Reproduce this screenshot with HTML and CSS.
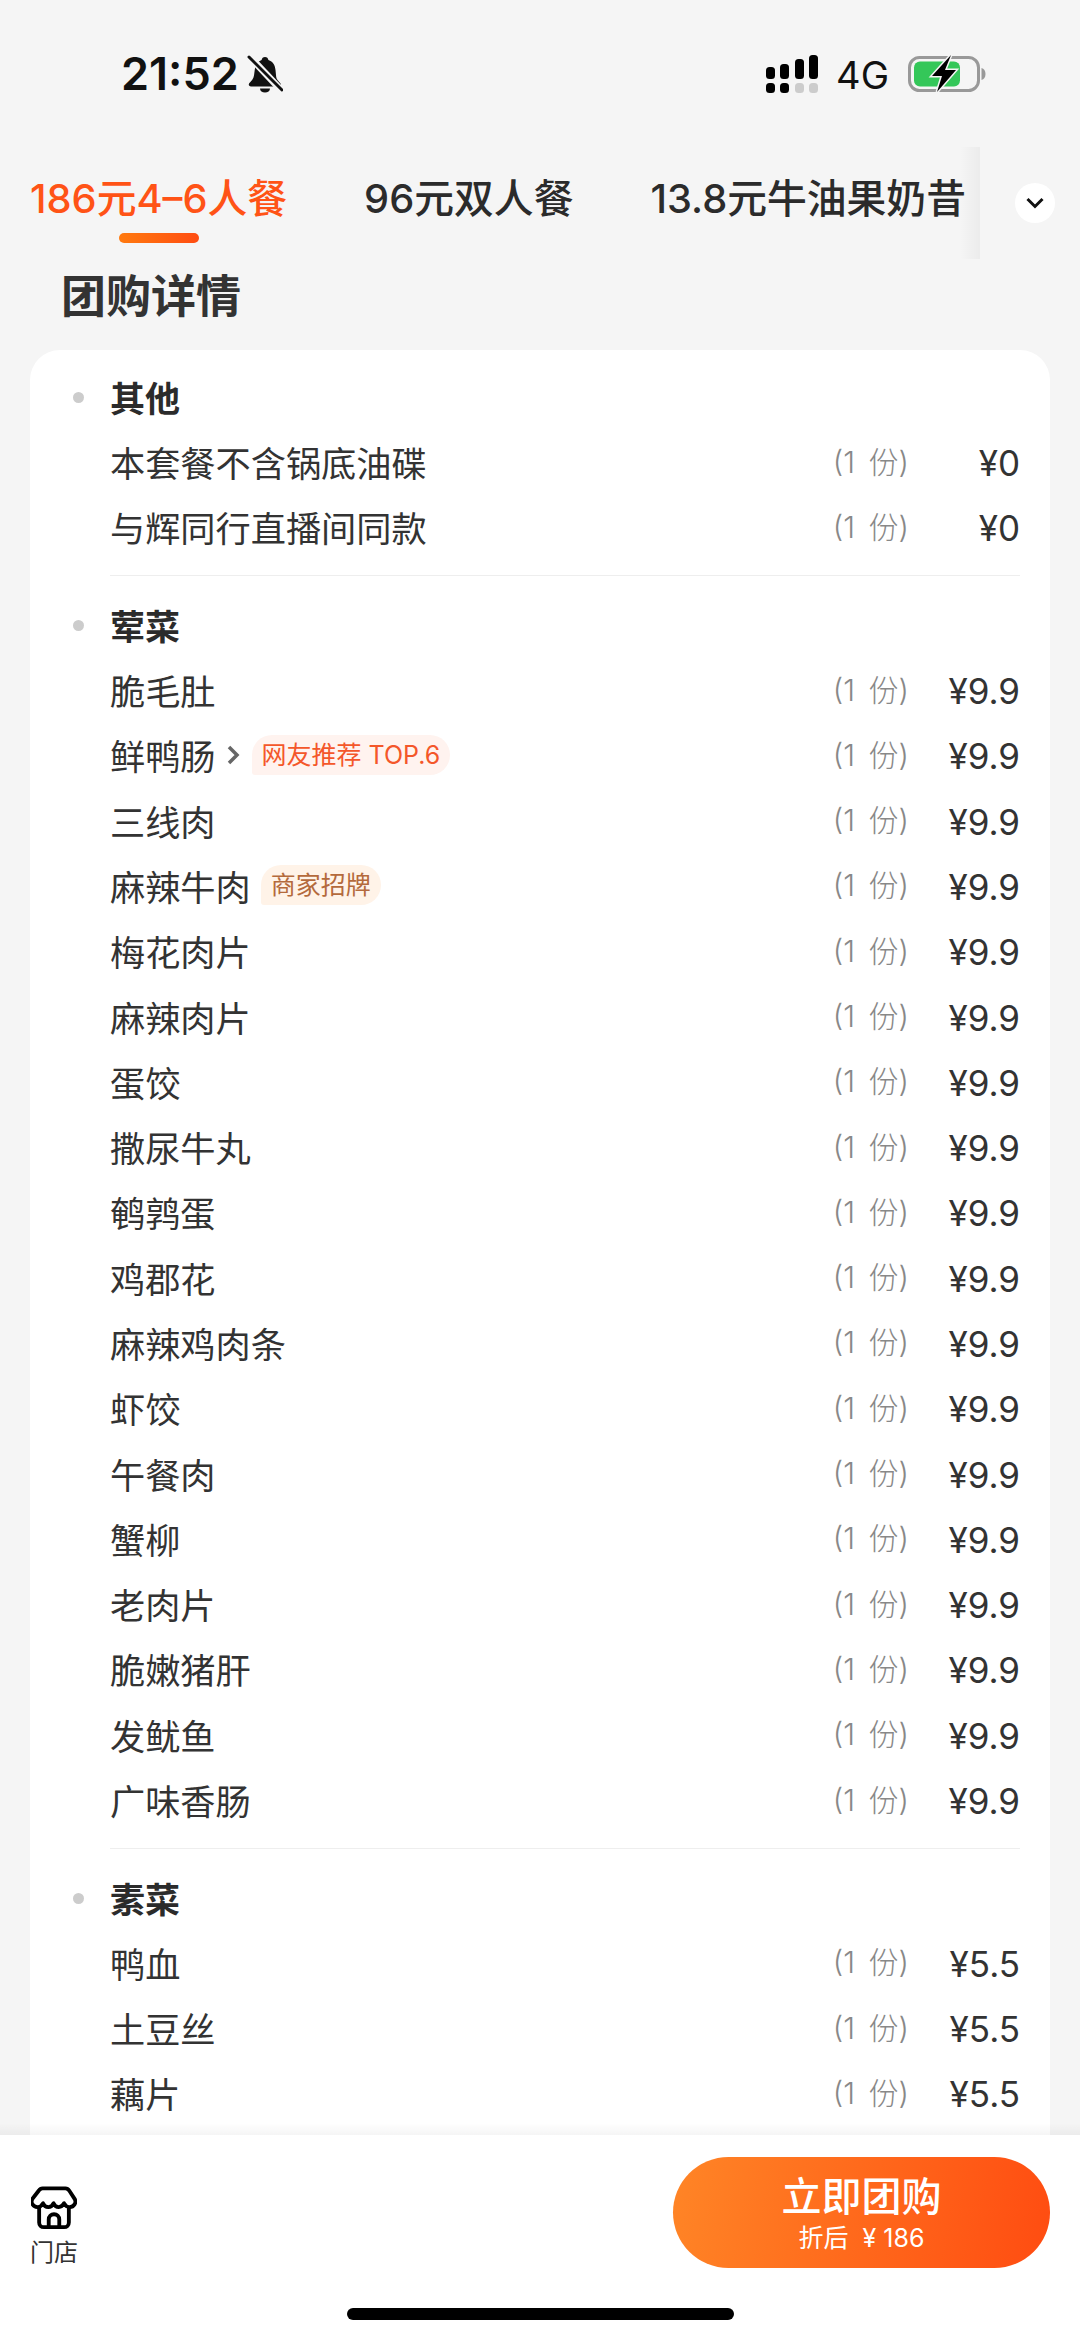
FILE: index.html
```html
<!DOCTYPE html>
<html lang="zh-CN">
<head>
  <meta charset="utf-8">
  <title>团购详情</title>
  <link rel="stylesheet" href="styles.css">
</head>
<body>
  <div class="main">
    <div class="status">
      <div class="status-left">
        <span class="time">21:52</span>
        <svg class="bell" width="36" height="38" viewBox="0 0 36 38">
          <path d="M18 2c2 0 3 1 3.400 3 4.600 1.400 6.600 5 7.100 10l.7 7c.3 2.500 2.300 4 4.300 6.500 1 1.500 0 3-1.500 3H4c-2 0-2.800-1.800-1.800-3.200C4.500 25.500 6.500 24 7 20.500l.8-6C8.400 10 10.500 6.400 14.600 5 15 3 16 2 18 2z" fill="#111"/>
          <path d="M13 33.500h10c0 2.500-2.200 4-5 4s-5-1.500-5-4z" fill="#111"/>
          <path d="M3 2l32 34" stroke="#f5f5f5" stroke-width="7"/>
          <path d="M2 2l33 33" stroke="#111" stroke-width="3" stroke-linecap="round"/>
        </svg>
      </div>
      <div class="status-right">
        <svg width="54" height="40" viewBox="0 0 54 40">
          <rect x="1" y="13" width="9" height="12" rx="3.500" fill="#000"/>
          <rect x="15" y="10" width="9" height="15" rx="3.500" fill="#000"/>
          <rect x="30" y="5" width="9" height="20" rx="3.500" fill="#000"/>
          <rect x="44" y="1" width="9" height="24" rx="3.500" fill="#000"/>
          <rect x="1" y="29" width="9" height="10" rx="3.500" fill="#000"/>
          <rect x="15" y="29" width="9" height="10" rx="3.500" fill="#000"/>
          <rect x="30" y="29" width="9" height="10" rx="3.500" fill="#ccc"/>
          <rect x="44" y="29" width="9" height="10" rx="3.500" fill="#ccc"/>
        </svg>
        <span class="net">4G</span>
        <svg width="78" height="40" viewBox="0 0 78 40">
          <rect x="1.500" y="3.500" width="69" height="33" rx="10" fill="none" stroke="#999" stroke-width="3"/>
          <path d="M73.500 14c2.500.5 4 3 4 6s-1.500 5.500-4 6z" fill="#999"/>
          <rect x="6" y="7.500" width="46" height="25" rx="6" fill="#34c759"/>
          <path d="M43 1L24 22h10l-5 16 19-22H37z" fill="#000" stroke="#f5f5f5" stroke-width="3" paint-order="stroke"/>
        </svg>
      </div>
    </div>

    <div class="tabs">
      <div class="tab-list">
        <div class="tab active">186元4–6人餐</div>
        <div class="tab">96元双人餐</div>
        <div class="tab">13.8元牛油果奶昔</div>
      </div>
      <div class="more">
        <svg width="20" height="14" viewBox="0 0 20 14"><path d="M2.500 3l7.500 7.500L17.500 3" fill="none" stroke="#111" stroke-width="3"/></svg>
      </div>
    </div>

    <h2 class="heading">团购详情</h2>

    <div class="card">
      <div class="group">
        <div class="group-title"><i class="dot"></i>其他</div>
        <div class="row"><span class="name">本套餐不含锅底油碟</span><span class="qty">(1 份)</span><span class="price">¥0</span></div>
        <div class="row"><span class="name">与辉同行直播间同款</span><span class="qty">(1 份)</span><span class="price">¥0</span></div>
      </div>
      <div class="group">
        <div class="group-title"><i class="dot"></i>荤菜</div>
        <div class="row"><span class="name">脆毛肚</span><span class="qty">(1 份)</span><span class="price">¥9.9</span></div>
        <div class="row">
          <span class="name">鲜鸭肠
            <svg class="arrow" width="14" height="24" viewBox="0 0 14 24"><path d="M3 4l8 8-8 8" fill="none" stroke="#666" stroke-width="3.500"/></svg>
            <span class="tag tag-hot">网友推荐 TOP.6</span>
          </span>
          <span class="qty">(1 份)</span><span class="price">¥9.9</span>
        </div>
        <div class="row"><span class="name">三线肉</span><span class="qty">(1 份)</span><span class="price">¥9.9</span></div>
        <div class="row">
          <span class="name">麻辣牛肉<span class="tag tag-shop">商家招牌</span></span>
          <span class="qty">(1 份)</span><span class="price">¥9.9</span>
        </div>
        <div class="row"><span class="name">梅花肉片</span><span class="qty">(1 份)</span><span class="price">¥9.9</span></div>
        <div class="row"><span class="name">麻辣肉片</span><span class="qty">(1 份)</span><span class="price">¥9.9</span></div>
        <div class="row"><span class="name">蛋饺</span><span class="qty">(1 份)</span><span class="price">¥9.9</span></div>
        <div class="row"><span class="name">撒尿牛丸</span><span class="qty">(1 份)</span><span class="price">¥9.9</span></div>
        <div class="row"><span class="name">鹌鹑蛋</span><span class="qty">(1 份)</span><span class="price">¥9.9</span></div>
        <div class="row"><span class="name">鸡郡花</span><span class="qty">(1 份)</span><span class="price">¥9.9</span></div>
        <div class="row"><span class="name">麻辣鸡肉条</span><span class="qty">(1 份)</span><span class="price">¥9.9</span></div>
        <div class="row"><span class="name">虾饺</span><span class="qty">(1 份)</span><span class="price">¥9.9</span></div>
        <div class="row"><span class="name">午餐肉</span><span class="qty">(1 份)</span><span class="price">¥9.9</span></div>
        <div class="row"><span class="name">蟹柳</span><span class="qty">(1 份)</span><span class="price">¥9.9</span></div>
        <div class="row"><span class="name">老肉片</span><span class="qty">(1 份)</span><span class="price">¥9.9</span></div>
        <div class="row"><span class="name">脆嫩猪肝</span><span class="qty">(1 份)</span><span class="price">¥9.9</span></div>
        <div class="row"><span class="name">发鱿鱼</span><span class="qty">(1 份)</span><span class="price">¥9.9</span></div>
        <div class="row"><span class="name">广味香肠</span><span class="qty">(1 份)</span><span class="price">¥9.9</span></div>
      </div>
      <div class="group">
        <div class="group-title"><i class="dot"></i>素菜</div>
        <div class="row"><span class="name">鸭血</span><span class="qty">(1 份)</span><span class="price">¥5.5</span></div>
        <div class="row"><span class="name">土豆丝</span><span class="qty">(1 份)</span><span class="price">¥5.5</span></div>
        <div class="row"><span class="name">藕片</span><span class="qty">(1 份)</span><span class="price">¥5.5</span></div>
      </div>
    </div>
  </div>

  <div class="footer">
    <div class="footer-bar">
      <div class="store">
        <svg width="46" height="46" viewBox="0 0 48 48">
          <path d="M12 3.500h24c2 0 3 1 4 2.500l5.500 8.500c2.500 4-1 8.500-5 8.500-2.600 0-4.800-1.500-6-4-1.300 2.500-3 4-5.500 4s-4.500-1.500-5.500-4c-1 2.500-3 4-5.500 4s-4.500-1.500-5.500-4c-1.200 2.500-3.400 4-6 4-4 0-7.500-4.500-5-8.500L8 6c1-1.500 2-2.500 4-2.500z" fill="none" stroke="#000" stroke-width="4" stroke-linejoin="round"/>
          <path d="M8.500 23v16c0 3 2 5 5 5h21c3 0 5-2 5-5V23" fill="none" stroke="#000" stroke-width="4"/>
          <path d="M18.500 44V36c0-3.500 2.500-5.500 5.500-5.500s5.500 2 5.500 5.500v8" fill="none" stroke="#000" stroke-width="4"/>
        </svg>
        <span class="store-label">门店</span>
      </div>
      <div class="buy">
        <span class="buy-main">立即团购</span>
        <span class="buy-sub">折后 &nbsp;¥ 186</span>
      </div>
    </div>
    <div class="home-bar"></div>
  </div>
</body>
</html>
```

FILE: styles.css
```css
* {
  box-sizing: border-box;
}

body {
  margin: 0;
  width: 1080px;
  height: 2341px;
  display: flex;
  flex-direction: column;
  overflow: hidden;
  background-color: #f5f5f5;
  font-family: Inter, "Noto Sans CJK SC", sans-serif;
  color: #333;
}

.main {
  flex: 1;
  min-height: 0;
  overflow: hidden;
}

/* status bar */
.status {
  height: 147px;
  padding: 0 94px 0 121px;
  display: flex;
  align-items: center;
  justify-content: space-between;
}

.status-left {
  display: flex;
  align-items: center;
  gap: 8px;
}

.time {
  font-size: 45px;
  font-weight: 600;
  color: #111;
}

.status-right {
  display: flex;
  align-items: center;
}

.net {
  font-size: 38px;
  color: #111;
  margin: 2px 19px 0 17px;
}

/* tabs */
.tabs {
  height: 112px;
  display: flex;
  align-items: center;
}

.tab-list {
  position: relative;
  width: 980px;
  height: 100%;
  padding: 0 0 8px 30px;
  display: flex;
  align-items: center;
  gap: 77px;
  font-size: 39.8px;
  line-height: 48px;
  font-weight: 500;
  color: #2b2b2b;
  white-space: nowrap;
}

.tab-list::after {
  content: "";
  position: absolute;
  top: 0;
  right: 0;
  width: 20px;
  height: 100%;
  background: linear-gradient(to right, rgba(0, 0, 0, 0), rgba(0, 0, 0, 0.04));
}

.tab {
  position: relative;
}

.tab.active {
  color: #ff5316;
}

.tab.active::after {
  content: "";
  position: absolute;
  left: 50%;
  bottom: -20px;
  width: 80px;
  height: 10px;
  margin-left: -40px;
  border-radius: 5px;
  background: linear-gradient(to right, #ff7a0f, #ff4d12);
}

.more {
  width: 40px;
  height: 40px;
  margin-left: 35px;
  border-radius: 50%;
  background-color: #fff;
  display: flex;
  align-items: center;
  justify-content: center;
}

.heading {
  height: 91px;
  margin: 0;
  padding: 8px 0 0 61px;
  font-size: 45px;
  line-height: 60px;
  font-weight: 700;
  color: #333;
}

/* list card */
.card {
  margin: 0 30px;
  padding: 15px 30px 60px 43px;
  border-radius: 30px;
  background-color: #fff;
}

.group {
  padding-bottom: 14px;
}

.group + .group {
  margin-left: 37px;
  padding-top: 17px;
  border-top: 1.5px solid #eee;
}

.group + .group .group-title {
  margin-left: -37px;
}

.group + .group .row {
  margin-left: 0;
}

.group-title {
  height: 65.4px;
  padding-bottom: 2px;
  display: flex;
  align-items: center;
  font-size: 35px;
  font-weight: 700;
  color: #2b2b2b;
}

.dot {
  width: 11px;
  height: 11px;
  margin: 2px 26px 0 0;
  border-radius: 50%;
  background-color: #ccc;
}

.row {
  height: 65.3px;
  margin-left: 37px;
  display: flex;
  align-items: center;
}

.name {
  flex: 1;
  display: flex;
  align-items: center;
  margin-bottom: 3px;
  font-size: 35.2px;
  color: #333;
}

.arrow {
  margin-left: 10px;
}

.tag {
  height: 40px;
  margin-left: 10px;
  padding: 0 10px;
  border-radius: 20px 20px 20px 3px;
  font-size: 25px;
  line-height: 40px;
}

.tag-hot {
  margin-left: 12px;
  background-color: #fff3ef;
  color: #f4572a;
}

.tag-shop {
  background-color: #fff3e8;
  color: #b46a3c;
}

.qty {
  margin-bottom: 7px;
  font-size: 30px;
  font-weight: 300;
  word-spacing: 5px;
  color: #888;
}

.price {
  width: 111px;
  text-align: right;
  font-size: 35px;
  color: #333;
}

/* bottom bar */
.footer {
  position: relative;
  height: 206px;
  padding: 22px 30px 0;
  background-color: #fff;
}

.footer::before {
  content: "";
  position: absolute;
  left: 0;
  right: 0;
  top: -12px;
  height: 12px;
  background: linear-gradient(to bottom, rgba(0, 0, 0, 0), rgba(0, 0, 0, 0.04));
}

.footer-bar {
  height: 111px;
  display: flex;
  align-items: flex-start;
  justify-content: space-between;
}

.store {
  width: 48px;
  padding-top: 28px;
  display: flex;
  flex-direction: column;
  align-items: center;
}

.store svg {
  display: block;
}

.store-label {
  margin-top: 5px;
  font-size: 24px;
  line-height: 34px;
  color: #333;
  white-space: nowrap;
}

.buy {
  width: 377px;
  height: 111px;
  border-radius: 56px;
  background: linear-gradient(100deg, #ff8526, #ff4c11);
  color: #fff;
  display: flex;
  flex-direction: column;
  align-items: center;
  justify-content: center;
}

.buy-main {
  font-size: 40px;
  line-height: 50px;
  font-weight: 500;
}

.buy-sub {
  font-size: 25px;
  line-height: 32px;
}

.home-bar {
  width: 387px;
  height: 12px;
  margin: 40px auto 0;
  border-radius: 6px;
  background-color: #000;
}
```
